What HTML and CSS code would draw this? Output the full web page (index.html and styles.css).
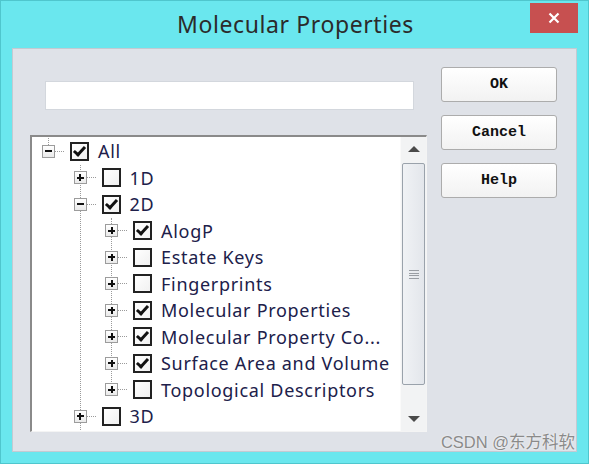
FILE: index.html
```html
<!DOCTYPE html>
<html lang="en">
<head>
    <meta charset="UTF-8">
    <meta name="viewport" content="width=device-width, initial-scale=1.0">
    <title>Molecular Properties</title>
    <link rel="stylesheet" href="styles.css">
</head>
<body>
    <div class="window">
        <div class="titlebar">
            <span class="title">Molecular Properties</span>
            <div class="close">
                <svg width="12" height="12" viewBox="0 0 12 12"><path d="M1.5 1.5l9 9M10.5 1.5l-9 9" stroke="#fff" stroke-width="2.2"/></svg>
            </div>
        </div>
        <div class="client">
            <div class="main">
                <input type="text" class="filter">
                <div class="tree-box">
                    <div class="tree">
                        <div class="node root">
                            <div class="row"><span class="exp"></span><span class="dots"></span><span class="check on"></span><span class="label">All</span></div>
                            <div class="children open">
                                <div class="node">
                                    <div class="row"><span class="exp plus"></span><span class="dots"></span><span class="check"></span><span class="label">1D</span></div>
                                </div>
                                <div class="node">
                                    <div class="row"><span class="exp"></span><span class="dots"></span><span class="check on"></span><span class="label">2D</span></div>
                                    <div class="children">
                                        <div class="row"><span class="exp plus"></span><span class="dots"></span><span class="check on"></span><span class="label">AlogP</span></div>
                                        <div class="row"><span class="exp plus"></span><span class="dots"></span><span class="check"></span><span class="label">Estate Keys</span></div>
                                        <div class="row"><span class="exp plus"></span><span class="dots"></span><span class="check"></span><span class="label">Fingerprints</span></div>
                                        <div class="row"><span class="exp plus"></span><span class="dots"></span><span class="check on"></span><span class="label">Molecular Properties</span></div>
                                        <div class="row"><span class="exp plus"></span><span class="dots"></span><span class="check on"></span><span class="label">Molecular Property Co...</span></div>
                                        <div class="row"><span class="exp plus"></span><span class="dots"></span><span class="check on"></span><span class="label">Surface Area and Volume</span></div>
                                        <div class="row"><span class="exp plus"></span><span class="dots"></span><span class="check"></span><span class="label">Topological Descriptors</span></div>
                                    </div>
                                </div>
                                <div class="node">
                                    <div class="row"><span class="exp plus"></span><span class="dots"></span><span class="check"></span><span class="label">3D</span></div>
                                </div>
                            </div>
                        </div>
                    </div>
                    <div class="scrollbar">
                        <div class="sb-btn"><span class="arrow up"></span></div>
                        <div class="sb-track">
                            <div class="thumb"><span class="grip"></span></div>
                        </div>
                        <div class="sb-btn"><span class="arrow down"></span></div>
                    </div>
                </div>
            </div>
            <div class="actions">
                <button class="btn">OK</button>
                <button class="btn">Cancel</button>
                <button class="btn">Help</button>
            </div>
        </div>
        <div class="watermark">CSDN @东方科软</div>
    </div>
</body>
</html>
```

FILE: styles.css
```css
body {
    margin: 0;
    padding: 0;
    background: #6ae7ee;
}
.window {
    position: relative;
    width: 589px;
    height: 464px;
    box-sizing: border-box;
    border: 1px solid #4fc6cd;
    background: #6ae7ee;
    padding: 0 11px 11px 11px;
    display: flex;
    flex-direction: column;
}
.titlebar {
    height: 47px;
    display: flex;
    align-items: center;
    justify-content: center;
    padding-bottom: 1px;
    box-sizing: border-box;
}
.title {
    font-family: "Noto Sans", sans-serif;
    font-size: 23px;
    letter-spacing: 0.6px;
    color: #2b2b2b;
    margin-left: 2px;
}
.close {
    position: absolute;
    top: 2px;
    right: 10px;
    width: 48px;
    height: 30px;
    background: #c75050;
    display: flex;
    align-items: center;
    justify-content: center;
}
.client {
    flex: 1;
    background: #dfe2e8;
    border: 1px solid #c3cad2;
    display: flex;
}
.main {
    padding-left: 17px;
    display: flex;
    flex-direction: column;
}
.filter {
    margin: 32px 0 0 15px;
    width: 369px;
    height: 29px;
    box-sizing: border-box;
    border: 1px solid #d3d7dd;
    background: #fff;
    outline: none;
}
.tree-box {
    margin-top: 25px;
    width: 397px;
    height: 297px;
    box-sizing: border-box;
    border-top: 2px solid #8a8a8a;
    border-left: 2px solid #8a8a8a;
    border-right: 1px solid #f4f4f4;
    border-bottom: 1px solid #f4f4f4;
    background: #fff;
    display: flex;
    overflow: hidden;
}
.tree {
    flex: 1;
    padding: 1px 0 0 10px;
    font-family: "Noto Sans", sans-serif;
    font-size: 18px;
    letter-spacing: 0.7px;
    color: #20204a;
}
.row {
    height: 26.5px;
    display: flex;
    align-items: center;
    white-space: nowrap;
}
.children {
    position: relative;
    margin-left: 31.5px;
}
.children::before {
    content: "";
    position: absolute;
    left: 6px;
    top: 0;
    bottom: 13px;
    border-left: 1px dotted #9a9a9a;
}
.children.open::before {
    bottom: 0;
}
.root > .row .exp::after {
    content: "";
    position: absolute;
    left: 5px;
    top: -14px;
    height: 13px;
    border-left: 1px dotted #9a9a9a;
}
.exp {
    position: relative;
    width: 13px;
    height: 13px;
    box-sizing: border-box;
    border: 1px solid #9c9c9c;
    background: linear-gradient(#fff, #eaeaea);
    flex: none;
}
.exp::before {
    content: "";
    position: absolute;
    left: 2px;
    top: 4.5px;
    width: 7px;
    height: 2px;
    background: #111;
}
.exp.plus::after {
    content: "";
    position: absolute;
    left: 4.5px;
    top: 2px;
    width: 2px;
    height: 7px;
    background: #111;
}
.dots {
    width: 9px;
    border-top: 1px dotted #9a9a9a;
    flex: none;
}
.check {
    margin-left: 6px;
    width: 19px;
    height: 19px;
    box-sizing: border-box;
    border: 2px solid #222;
    background: linear-gradient(135deg, #fff, #f1f1f1);
    display: flex;
    align-items: center;
    justify-content: center;
    flex: none;
}
.check.on::after {
    content: "";
    width: 4px;
    height: 9px;
    margin-top: -3px;
    border: solid #111;
    border-width: 0 3px 3px 0;
    transform: rotate(42deg);
}
.label {
    margin-left: 9px;
}
.scrollbar {
    width: 25px;
    background: #f2f3f4;
    border-left: 1px solid #fafafa;
    display: flex;
    flex-direction: column;
    flex: none;
}
.sb-btn {
    height: 24px;
    display: flex;
    align-items: center;
    justify-content: center;
}
.arrow {
    width: 0;
    height: 0;
    border-left: 6px solid transparent;
    border-right: 6px solid transparent;
}
.arrow.up {
    border-bottom: 6px solid #4a4a4a;
}
.arrow.down {
    border-top: 6px solid #4a4a4a;
}
.sb-track {
    flex: 1;
    padding: 2px 1px 0 1px;
}
.thumb {
    height: 222px;
    box-sizing: border-box;
    border: 1px solid #9aa2ab;
    border-radius: 2px;
    background: linear-gradient(to right, #f0f2f5, #e3e6eb);
    display: flex;
    align-items: center;
    justify-content: center;
}
.grip {
    width: 10px;
    height: 9px;
    background: repeating-linear-gradient(#9a9ea4 0 1px, transparent 1px 2.6px);
}
.actions {
    padding: 18px 0 0 14px;
    display: flex;
    flex-direction: column;
    gap: 13px;
}
.btn {
    width: 116px;
    height: 35px;
    border: 1px solid #acacac;
    border-radius: 3px;
    background: linear-gradient(#ffffff, #f2f2f2);
    font-family: "Liberation Mono", monospace;
    font-weight: bold;
    font-size: 15px;
    color: #111;
    padding: 0;
}
.watermark {
    position: absolute;
    right: 13px;
    bottom: 10px;
    font-family: "Liberation Sans", "Noto Sans CJK SC", sans-serif;
    font-size: 16.5px;
    color: #8a8a8a;
    text-shadow: 0 0 2px #fff;
}
```
